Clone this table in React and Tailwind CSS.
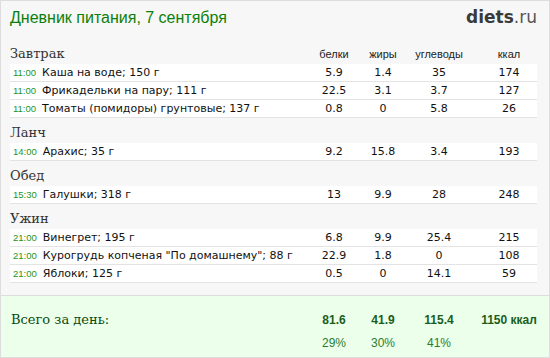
const meals = [
  {
    title: "Завтрак",
    items: [
      { time: "11:00", name: "Каша на воде; 150 г", p: "5.9", f: "1.4", c: "35", k: "174" },
      { time: "11:00", name: "Фрикадельки на пару; 111 г", p: "22.5", f: "3.1", c: "3.7", k: "127" },
      { time: "11:00", name: "Томаты (помидоры) грунтовые; 137 г", p: "0.8", f: "0", c: "5.8", k: "26" },
    ],
  },
  {
    title: "Ланч",
    items: [{ time: "14:00", name: "Арахис; 35 г", p: "9.2", f: "15.8", c: "3.4", k: "193" }],
  },
  {
    title: "Обед",
    items: [{ time: "15:30", name: "Галушки; 318 г", p: "13", f: "9.9", c: "28", k: "248" }],
  },
  {
    title: "Ужин",
    items: [
      { time: "21:00", name: "Винегрет; 195 г", p: "6.8", f: "9.9", c: "25.4", k: "215" },
      { time: "21:00", name: 'Курогрудь копченая "По домашнему"; 88 г', p: "22.9", f: "1.8", c: "0", k: "108" },
      { time: "21:00", name: "Яблоки; 125 г", p: "0.5", f: "0", c: "14.1", k: "59" },
    ],
  },
];

const grid = "grid grid-cols-[1fr_48px_50px_62px_67px]";
const serif = "font-['DejaVu_Serif',serif]";
const sans = "font-['Liberation_Sans',Arial,sans-serif]";
const verdana = "font-['DejaVu_Sans',Verdana,sans-serif]";

function Row({ item }) {
  return (
    <div className={`${grid} h-[18px] bg-white border-b border-[#e3e3e3] text-[11px] leading-[17px] text-[#111] ${verdana}`}>
      <div className="flex items-baseline gap-[6px] pl-[3px] whitespace-nowrap">
        <span className={`text-[9.5px] text-[#1c951c] ${sans}`}>{item.time}</span>
        <span>{item.name}</span>
      </div>
      <div className="text-center">{item.p}</div>
      <div className="text-center">{item.f}</div>
      <div className="text-center">{item.c}</div>
      <div className="text-center pl-[11px]">{item.k}</div>
    </div>
  );
}

export default function App() {
  return (
    <div className="w-[550px] h-[358px] border border-[#dddddd] bg-[#f7f7f7] flex flex-col overflow-hidden">
      {/* header */}
      <div className="h-[38px] pt-[6px] pl-[9px] pr-[12px] flex items-baseline justify-between">
        <h1 className={`text-[16px] leading-[20px] text-[#0b800b] ${sans}`}>Дневник питания, 7 сентября</h1>
        <div className={`text-[17px] leading-[20px] text-[#3a3a3a] ${verdana}`}>
          <span className="font-bold">diets</span>
          <span className="text-[#555]">.ru</span>
        </div>
      </div>

      {/* meals */}
      <div className="pl-[9px] pr-[12px]">
        {meals.map((meal, i) => (
          <div key={meal.title}>
            <div className={`${grid} pt-[6px] h-[25px] leading-[18px] items-baseline`}>
              <div className={`text-[13px] text-[#333] ${serif}`}>{meal.title}</div>
              {i === 0 && (
                <>
                  <div className={`text-center text-[11px] text-[#222] ${sans}`}>белки</div>
                  <div className={`text-center text-[11px] text-[#222] ${sans}`}>жиры</div>
                  <div className={`text-center text-[11px] text-[#222] ${sans}`}>углеводы</div>
                  <div className={`text-center pl-[11px] text-[11px] text-[#222] ${sans}`}>ккал</div>
                </>
              )}
            </div>
            {meal.items.map((item, j) => (
              <Row key={j} item={item} />
            ))}
          </div>
        ))}
      </div>

      {/* totals */}
      <div className="mt-auto h-[62px] border-t border-[#dddddd] bg-[#ebffeb] pl-[9px] pr-[12px] pt-[15px]">
        <div className={`${grid} items-baseline`}>
          <div className={`pl-[1px] text-[13px] leading-[18px] text-[#0d4a0d] ${serif}`}>Всего за день:</div>
          <div className={`text-center text-[12px] font-bold text-[#1b5e1b] ${sans}`}>81.6</div>
          <div className={`text-center text-[12px] font-bold text-[#1b5e1b] ${sans}`}>41.9</div>
          <div className={`text-center text-[12px] font-bold text-[#1b5e1b] ${sans}`}>115.4</div>
          <div className={`text-center pl-[11px] whitespace-nowrap text-[12px] font-bold text-[#1b5e1b] ${sans}`}>1150 ккал</div>
        </div>
        <div className={`${grid} mt-[5px] text-[12px] text-[#2e7d2e] ${sans}`}>
          <div />
          <div className="text-center">29%</div>
          <div className="text-center">30%</div>
          <div className="text-center">41%</div>
          <div />
        </div>
      </div>
    </div>
  );
}
